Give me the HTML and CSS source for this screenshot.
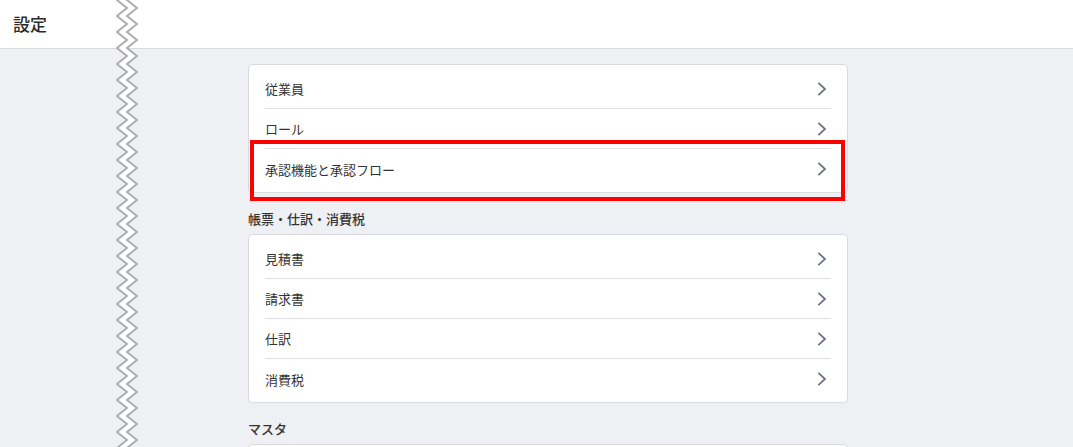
FILE: index.html
```html
<!DOCTYPE html>
<html lang="ja">
<head>
<meta charset="utf-8">
<link rel="stylesheet" href="styles.css">
</head>
<body>
<header class="topbar"><h1 class="title">設定</h1></header>
<main class="main">
  <div class="column">
    <div class="card">
      <a class="row"><span>従業員</span><svg class="chev" viewBox="0 0 10 14"><polyline points="2,1.5 8,7 2,12.5"/></svg></a>
      <a class="row"><span>ロール</span><svg class="chev" viewBox="0 0 10 14"><polyline points="2,1.5 8,7 2,12.5"/></svg></a>
      <a class="row"><span>承認機能と承認フロー</span><svg class="chev" viewBox="0 0 10 14"><polyline points="2,1.5 8,7 2,12.5"/></svg></a>
      <div class="highlight"></div>
    </div>
    <h2 class="section">帳票・仕訳・消費税</h2>
    <div class="card">
      <a class="row"><span>見積書</span><svg class="chev" viewBox="0 0 10 14"><polyline points="2,1.5 8,7 2,12.5"/></svg></a>
      <a class="row"><span>請求書</span><svg class="chev" viewBox="0 0 10 14"><polyline points="2,1.5 8,7 2,12.5"/></svg></a>
      <a class="row"><span>仕訳</span><svg class="chev" viewBox="0 0 10 14"><polyline points="2,1.5 8,7 2,12.5"/></svg></a>
      <a class="row"><span>消費税</span><svg class="chev" viewBox="0 0 10 14"><polyline points="2,1.5 8,7 2,12.5"/></svg></a>
    </div>
    <h2 class="section">マスタ</h2>
    <div class="card card-stub"></div>
  </div>
</main>
<svg class="zigzag" width="26" height="447" viewBox="0 0 26 447">
  <defs>
    <pattern id="zz" x="0" y="0" width="26" height="16" patternUnits="userSpaceOnUse">
      <polygon points="2,0 12,8 2,16 12,16 22,8 12,0" fill="#ffffff"/>
      <polyline points="2,-1 2,0 12,8 2,16 2,17" fill="none" stroke="#a9a9a9" stroke-width="1.8"/>
      <polyline points="12,-1 12,0 22,8 12,16 12,17" fill="none" stroke="#a9a9a9" stroke-width="1.8"/>
    </pattern>
  </defs>
  <rect x="0" y="0" width="26" height="447" fill="url(#zz)"/>
</svg>
</body>
</html>
```

FILE: styles.css
```css
* { box-sizing: border-box; }
html, body { margin: 0; padding: 0; }
body {
  background: #eff0f4;
  font-family: "Noto Sans CJK JP", "Noto Sans", sans-serif;
  color: #333;
  height: 447px;
  overflow: hidden;
  position: relative;
}
.topbar {
  height: 49px;
  background: #fff;
  border-bottom: 1px solid #d9dae0;
  display: flex;
  align-items: center;
  padding-left: 13px;
}
.title {
  margin: 0;
  font-size: 17px;
  font-weight: 500;
  color: #2b2b2b;
  line-height: 20px;
}
.main {
  padding: 15px 0 0 248px;
}
.column {
  width: 600px;
}
.card {
  position: relative;
  background: #fff;
  border: 1px solid #d9dbe1;
  border-radius: 4px;
  padding: 4px 0 3px;
  margin-bottom: 16px;
}
.card-stub {
  height: 40px;
}
.row {
  display: flex;
  align-items: center;
  justify-content: space-between;
  height: 40px;
  margin: 0 16px;
  border-bottom: 1px solid #dfe0e5;
  font-size: 13px;
  color: #333;
  padding-right: 4px;
}
.row:last-of-type { border-bottom: none; }
.chev {
  width: 10px;
  height: 14px;
}
.chev polyline {
  fill: none;
  stroke: #6f7580;
  stroke-width: 1.8;
  stroke-linecap: square;
}
.section {
  margin: 0 0 5px;
  font-size: 13px;
  font-weight: 500;
  line-height: 20px;
  color: #333;
}
.highlight {
  position: absolute;
  left: 1px;
  right: 2px;
  top: 75px;
  height: 61px;
  border: 4px solid #ff0000;
  pointer-events: none;
}
.zigzag {
  position: absolute;
  left: 115px;
  top: 0;
}
```
